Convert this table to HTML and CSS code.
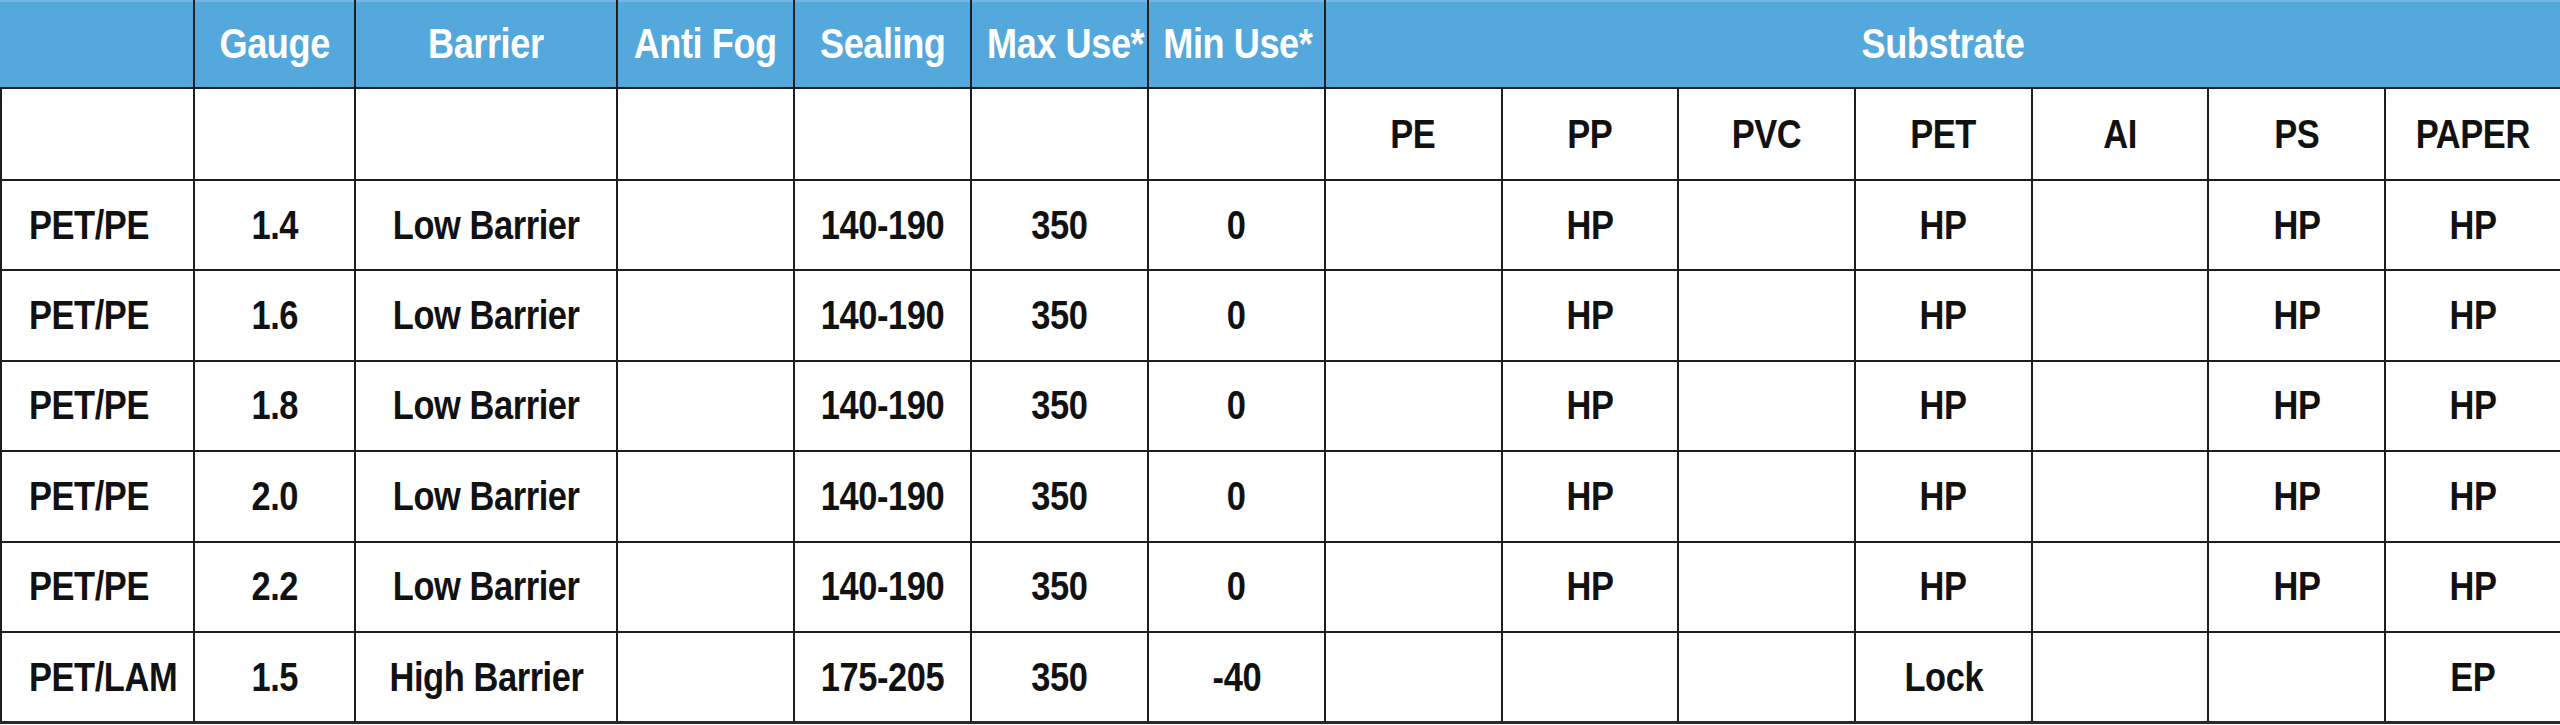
FILE: index.html
```html
<!DOCTYPE html>
<html lang="en">
<head>
<meta charset="utf-8">
<title>Film specifications</title>
<link rel="stylesheet" href="styles.css">
</head>
<body>
<table class="spec">
  <colgroup>
    <col class="c-name">
    <col class="c-gauge">
    <col class="c-barrier">
    <col class="c-std">
    <col class="c-std">
    <col class="c-std">
    <col class="c-std">
    <col class="c-sub"><col class="c-sub"><col class="c-sub"><col class="c-sub"><col class="c-sub"><col class="c-sub"><col class="c-sub">
  </colgroup>
  <thead>
    <tr class="head">
      <th></th>
      <th><span class="t">Gauge</span></th>
      <th><span class="t">Barrier</span></th>
      <th><span class="t">Anti Fog</span></th>
      <th><span class="t">Sealing</span></th>
      <th><span class="t">Max Use*</span></th>
      <th><span class="t">Min Use*</span></th>
      <th colspan="7"><span class="t">Substrate</span></th>
    </tr>
    <tr class="subhead">
      <td></td><td></td><td></td><td></td><td></td><td></td><td></td>
      <td><span class="t">PE</span></td><td><span class="t">PP</span></td><td><span class="t">PVC</span></td><td><span class="t">PET</span></td><td><span class="t">AI</span></td><td><span class="t">PS</span></td><td><span class="t">PAPER</span></td>
    </tr>
  </thead>
  <tbody>
    <tr><td class="name"><span class="t">PET/PE</span></td><td><span class="t">1.4</span></td><td><span class="t">Low Barrier</span></td><td></td><td><span class="t">140-190</span></td><td><span class="t">350</span></td><td><span class="t">0</span></td><td></td><td><span class="t">HP</span></td><td></td><td><span class="t">HP</span></td><td></td><td><span class="t">HP</span></td><td><span class="t">HP</span></td></tr>
    <tr><td class="name"><span class="t">PET/PE</span></td><td><span class="t">1.6</span></td><td><span class="t">Low Barrier</span></td><td></td><td><span class="t">140-190</span></td><td><span class="t">350</span></td><td><span class="t">0</span></td><td></td><td><span class="t">HP</span></td><td></td><td><span class="t">HP</span></td><td></td><td><span class="t">HP</span></td><td><span class="t">HP</span></td></tr>
    <tr><td class="name"><span class="t">PET/PE</span></td><td><span class="t">1.8</span></td><td><span class="t">Low Barrier</span></td><td></td><td><span class="t">140-190</span></td><td><span class="t">350</span></td><td><span class="t">0</span></td><td></td><td><span class="t">HP</span></td><td></td><td><span class="t">HP</span></td><td></td><td><span class="t">HP</span></td><td><span class="t">HP</span></td></tr>
    <tr><td class="name"><span class="t">PET/PE</span></td><td><span class="t">2.0</span></td><td><span class="t">Low Barrier</span></td><td></td><td><span class="t">140-190</span></td><td><span class="t">350</span></td><td><span class="t">0</span></td><td></td><td><span class="t">HP</span></td><td></td><td><span class="t">HP</span></td><td></td><td><span class="t">HP</span></td><td><span class="t">HP</span></td></tr>
    <tr><td class="name"><span class="t">PET/PE</span></td><td><span class="t">2.2</span></td><td><span class="t">Low Barrier</span></td><td></td><td><span class="t">140-190</span></td><td><span class="t">350</span></td><td><span class="t">0</span></td><td></td><td><span class="t">HP</span></td><td></td><td><span class="t">HP</span></td><td></td><td><span class="t">HP</span></td><td><span class="t">HP</span></td></tr>
    <tr><td class="name"><span class="t">PET/LAM</span></td><td><span class="t">1.5</span></td><td><span class="t">High Barrier</span></td><td></td><td><span class="t">175-205</span></td><td><span class="t">350</span></td><td><span class="t">-40</span></td><td></td><td></td><td></td><td><span class="t">Lock</span></td><td></td><td></td><td><span class="t">EP</span></td></tr>
  </tbody>
</table>
</body>
</html>
```

FILE: styles.css
```css
html, body {
  margin: 0;
  padding: 0;
  background: #ffffff;
}

.spec {
  width: 2560px;
  table-layout: fixed;
  border-collapse: collapse;
  font-family: "Liberation Sans", Arial, sans-serif;
  font-weight: 700;
  font-size: 41px;
  letter-spacing: -0.5px;
  color: #111111;
  border-right: 3px solid #2a2a2a;
  border-bottom: 3px solid #2a2a2a;
  border-left: 2px solid #2a2a2a;
}

.c-name { width: 193px; }
.c-gauge { width: 161px; }
.c-barrier { width: 262px; }
.c-std { width: 177px; }
.c-sub { width: 176.7px; }

.spec th,
.spec td {
  border: 2px solid #1e1e1e;
  padding: 0;
  text-align: center;
  vertical-align: middle;
  white-space: nowrap;
  overflow: visible;
}

.t {
  display: inline-block;
  transform: scaleX(0.84);
  transform-origin: center center;
}

.head th {
  height: 83px;
  background: #55a8dc;
  color: #ffffff;
  font-size: 43px;
  border-top: 2px solid #73b8e4;
  padding-bottom: 2px;
}

.head th:first-child {
  border-left-color: #55a8dc;
}

.subhead td {
  height: 90px;
}

.spec tbody td {
  height: 88.4px;
}

.spec td.name {
  text-align: left;
  padding-left: 27px;
}

.spec td.name .t {
  transform-origin: left center;
}
```
